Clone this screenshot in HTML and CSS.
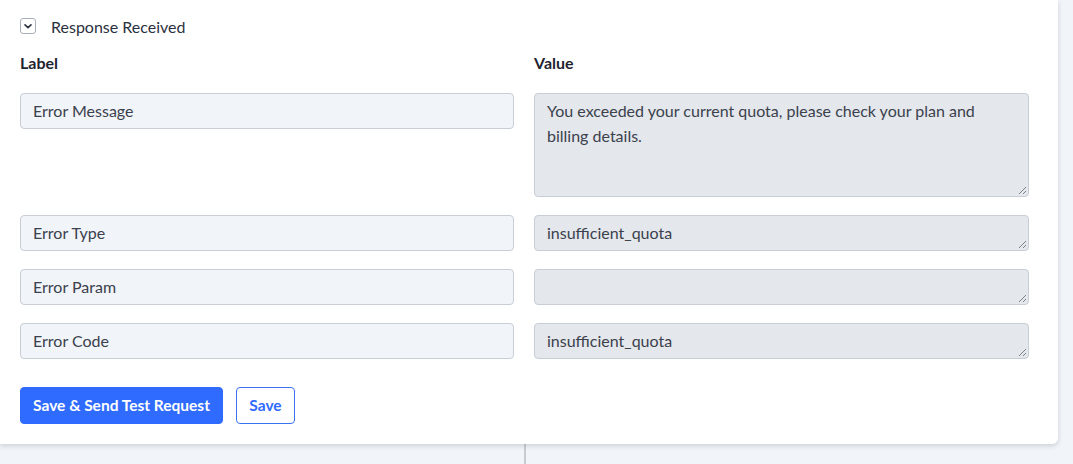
FILE: index.html
```html
<!DOCTYPE html>
<html>

<head>
    <title>Response Received</title>
    <link rel="stylesheet" href="styles.css">
</head>

<body>
    <div class="backdrop">
        <div class="panel">
            <div class="toggle">
                <span class="toggle-box">
                    <svg width="10" height="10" viewBox="0 0 10 10"><path d="M2 3.8 L5 6.6 L8 3.8" fill="none" stroke="#2b3240" stroke-width="1.6" stroke-linecap="round" stroke-linejoin="round"/></svg>
                </span>
                <span class="toggle-text">Response Received</span>
            </div>

            <div class="fields">
                <div class="head">Label</div>
                <div class="head">Value</div>

                <div class="label-cell">Error Message</div>
                <div class="value-cell tall">You exceeded your current quota, please check your plan and billing details.</div>

                <div class="label-cell">Error Type</div>
                <div class="value-cell">insufficient_quota</div>

                <div class="label-cell">Error Param</div>
                <div class="value-cell"></div>

                <div class="label-cell">Error Code</div>
                <div class="value-cell">insufficient_quota</div>
            </div>

            <div class="actions">
                <button class="btn btn-primary">Save &amp; Send Test Request</button>
                <button class="btn btn-outline">Save</button>
            </div>
        </div>
        <div class="below">
            <div class="below-left"></div>
            <div class="below-right"></div>
        </div>
    </div>
</body>

</html>
```

FILE: styles.css
```css
html,
body {
    margin: 0;
    padding: 0;
    background-color: #F1F4F8;
    font-family: Lato, "Open Sans", sans-serif;
    color: #3B414D;
}
.backdrop {
    width: 1073px;
    height: 464px;
    overflow: hidden;
}
.panel {
    width: 1058px;
    height: 444px;
    box-sizing: border-box;
    padding: 16px 29px 0 20px;
    background-color: white;
    border-bottom-right-radius: 6px;
    box-shadow: 0 2px 5px rgba(40, 50, 70, 0.18);
    position: relative;
    z-index: 1;
}
.toggle {
    display: flex;
    align-items: center;
    height: 20px;
}
.toggle-box {
    width: 14px;
    height: 14px;
    border: 1px solid #A9AFBA;
    border-radius: 3px;
    display: flex;
    align-items: center;
    justify-content: center;
}
.toggle-text {
    margin-left: 15px;
    font-size: 16px;
    color: #2B3140;
}
.fields {
    display: grid;
    grid-template-columns: 494px 495px;
    column-gap: 20px;
    row-gap: 18px;
    margin-top: 17px;
}
.head {
    font-weight: bold;
    font-size: 16px;
    color: #1F2430;
    height: 20px;
    line-height: 20px;
    margin-bottom: 2px;
}
.label-cell,
.value-cell {
    box-sizing: border-box;
    border: 1px solid #C9CED6;
    border-radius: 4px;
    padding: 5px 12px;
    font-size: 16px;
    line-height: 24px;
    height: 36px;
}
.label-cell {
    background-color: #F1F4F8;
}
.value-cell {
    background-color: #E4E7EB;
    position: relative;
}
.value-cell.tall {
    height: 104px;
    padding-top: 4px;
    line-height: 25px;
}
.value-cell::after {
    content: "";
    position: absolute;
    right: 2px;
    bottom: 2px;
    width: 7px;
    height: 7px;
    background: linear-gradient(135deg, transparent 45%, #7C828C 45%, #7C828C 55%, transparent 55%, transparent 72%, #7C828C 72%, #7C828C 82%, transparent 82%);
}
.actions {
    display: flex;
    gap: 13px;
    margin-top: 28px;
}
.btn {
    height: 37px;
    box-sizing: border-box;
    border-radius: 4px;
    font-family: inherit;
    font-size: 15.5px;
    font-weight: bold;
    padding: 0 0 2px;
    cursor: pointer;
}
.btn-primary {
    width: 203px;
    background-color: #2F6BFF;
    border: 1px solid #2F6BFF;
    color: white;
}
.btn-outline {
    background-color: white;
    border: 1px solid #3B72F0;
    color: #2F6BFF;
    width: 59px;
}
.below {
    display: flex;
    height: 20px;
}
.below-left {
    width: 524px;
    border-right: 2px solid #C8CCD2;
}
.below-right {
    flex: 1;
}
```
